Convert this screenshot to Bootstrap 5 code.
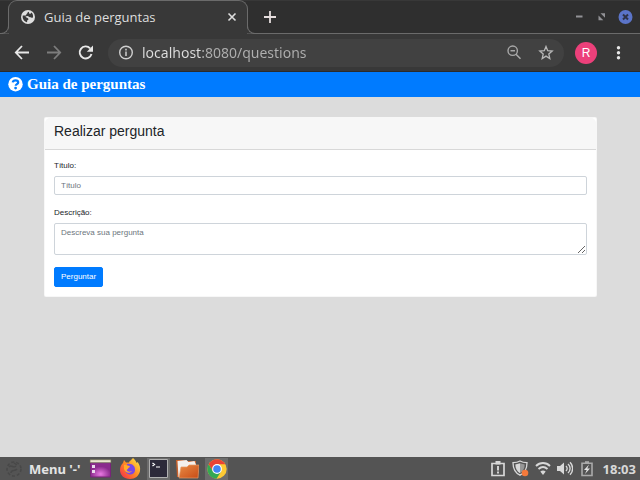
<!DOCTYPE html>
<html lang="pt-BR">
<head>
<meta charset="utf-8">
<meta name="viewport" content="width=device-width, initial-scale=1">
<title>Guia de perguntas</title>
<link href="https://cdn.jsdelivr.net/npm/bootstrap@5.3.0/dist/css/bootstrap.min.css" rel="stylesheet">
<style>
body{background:#dcdcdc;font-family:"Liberation Sans",Arial,sans-serif}
svg{display:block;flex-shrink:0}
.icon-btn{background:none;border:0;padding:0;color:inherit;display:flex;align-items:center;justify-content:center;flex-shrink:0}
.tabstrip{height:34px;background:#2f2f2f;border-bottom:1px solid #6b6b6b;border-top:1px solid #383838;padding:0 7px 0 8px;color:#dedede}
.browser-tab{position:relative;width:240px;height:34px;margin-top:-1px;background:#383838;border:1px solid #6b6b6b;border-bottom:0;border-radius:9px 9px 0 0;padding:0 9px 0 12px;font:13px/32px "Open Sans","Noto Sans",sans-serif}
.browser-tab::before,.browser-tab::after{content:"";position:absolute;bottom:0;width:8px;height:8px;border-bottom:1px solid #6b6b6b;box-sizing:border-box}
.browser-tab::before{left:-8px;border-right:1px solid #6b6b6b;border-bottom-right-radius:8px;box-shadow:2px 2px 0 #383838;clip-path:inset(0)}
.browser-tab::after{right:-8px;border-left:1px solid #6b6b6b;border-bottom-left-radius:8px;box-shadow:-2px 2px 0 #383838;clip-path:inset(0)}
.window-tools{gap:12px;color:#929296}
.toolbar{height:38px;background:#383838;border-bottom:1px solid #2b2b2b;padding:0 12px 0 14px;color:#e8e8e8}
.toolbar-nav{gap:16px;margin-right:14px}
.omnibox{height:28px;border-radius:14px;background:#414141;padding:0 10px 0 10px;color:#a8a8a8}
.address{min-width:0;border:0;outline:0;padding:0;margin-left:8px;font:14px/20px "Noto Sans","Open Sans",sans-serif;color:transparent;background:linear-gradient(90deg,#dedede 59px,#b0b0b0 59px);-webkit-background-clip:text;background-clip:text}
.avatar{width:22px;height:22px;background:#ec407a;border-radius:50%;color:#fff;font:12px/22px "Liberation Sans",sans-serif;margin:0 13px 0 11px}
.site-bar{background:#007bff;height:25px;padding:0 8px}
.site-brand{color:#fff;font:bold 15px/24px "Liberation Serif","Times New Roman",serif;text-decoration:none;gap:4px}
.page-body{padding:20px 43px 20px 44px}
.question-card{border-color:rgba(0,0,0,.03);border-radius:2px;background-clip:border-box}
.question-card .card-header{background:#f7f7f7;border-color:#d8d8d8;padding:4px 9px 8px}
.question-card h1{font-size:14px;line-height:19px;font-weight:400;color:#212529}
.question-card .card-body{padding:10px 9px 9px}
.question-card .form-label{display:block;font-size:8px;line-height:12px;margin-bottom:4px;color:#212529}
.question-card .form-control{font-size:8px;line-height:12px;padding:3px 6px 2px;border-color:#ced4da;border-radius:2px;min-height:19px}
.question-card textarea.form-control{height:32px}
.question-card .form-control::placeholder{color:#6c757d}
.field{margin-bottom:12px}
.ask{display:block;background:#007bff;border-color:#007bff;border-radius:2px;font-size:8px;line-height:12px;padding:3px 6px}
.taskbar{height:23px;background:#545454;color:#e4e4e4;padding:0 4px 0 5px;font:bold 13px/22px "Noto Sans","Open Sans",sans-serif}
.menu-btn{gap:6px}
.launchers{gap:6px;margin-left:9px}
.launch{width:23px;height:22px}
.launch.running{background:#6c6c6c}
.tray{gap:6px;color:#d8d8d8}
.tray time{margin-left:2px}
</style>
</head>
<body class="d-flex flex-column min-vh-100">
<header>
  <div class="tabstrip d-flex align-items-center">
    <div class="browser-tab d-flex align-items-center">
      <svg width="15" height="14" viewBox="0 0 15 14" class="me-2"><circle cx="7" cy="7" r="7" fill="#dedede"/><path d="M7.500 1.700C6 2.200 7 3.200 5.800 3.800 5 4.200 5.600 5.400 4.600 5.500l-2.800.1c-.4 1.700 0 3.400 1 4.600 1 1.100 2 1.700 3.200 2 .4-1-.2-1.600.7-2.100 1-.5 1-1.300.2-1.900-1-.8-2.100-.5-2.500-1.600L6.200 6c1.200-.2 1.600 1.200 2.800 1.200 1.300 0 1.500.9 2.900.3.600-2.100-.3-4-1.600-4.900-.2 1-.8 1.400-1.700 1.100-.8-.3-.1-1.200-1.100-2z" fill="#383838"/></svg>
      <span class="flex-grow-1 text-truncate">Guia de perguntas</span>
      <button class="icon-btn" type="button" aria-label="Fechar guia"><svg width="12" height="12" viewBox="0 0 12 12"><path d="M2.500 2.500l7 7M9.500 2.500l-7 7" stroke="#dedede" stroke-width="1.600"/></svg></button>
    </div>
    <button class="icon-btn ms-3" type="button" aria-label="Nova guia"><svg width="12" height="12" viewBox="0 0 12 12"><path d="M6 0v12M0 6h12" stroke="#e6dede" stroke-width="1.800"/></svg></button>
    <div class="window-tools d-flex align-items-center ms-auto">
      <button class="icon-btn" type="button" aria-label="Minimizar"><svg width="10" height="8" viewBox="0 0 10 8"><path d="M2 3.500h6.500" stroke="currentColor" stroke-width="2"/></svg></button>
      <button class="icon-btn" type="button" aria-label="Restaurar"><svg width="10" height="8" viewBox="0 0 10 8"><path d="M4.500.3h4.500V4.800zM2.500 2.500v4.800H7.300z" fill="currentColor"/></svg></button>
      <button class="icon-btn" type="button" aria-label="Fechar"><svg width="15" height="15" viewBox="0 0 15 15"><circle cx="7.500" cy="7" r="7" fill="#5b74c8"/><path d="M5 4.500l5 5M10 4.500l-5 5" stroke="#2f3347" stroke-width="2"/></svg></button>
    </div>
  </div>
  <div class="toolbar d-flex align-items-center">
    <div class="toolbar-nav d-flex align-items-center">
      <button class="icon-btn" type="button" aria-label="Voltar"><svg width="16" height="16" viewBox="0 0 16 16"><path d="M15 7.500H2M8 1L1.800 7.500 8 14" fill="none" stroke="#e8e8e8" stroke-width="1.800"/></svg></button>
      <button class="icon-btn" type="button" aria-label="Avançar"><svg width="16" height="16" viewBox="0 0 16 16"><path d="M1 7.500h13M8 1l6.200 6.500L8 14" fill="none" stroke="#7d7d7d" stroke-width="1.800"/></svg></button>
      <button class="icon-btn" type="button" aria-label="Recarregar"><svg width="16" height="16" viewBox="0 0 16 16"><path d="M13.500 9A6 6 0 1 1 12.100 3.300" fill="none" stroke="#e8e8e8" stroke-width="1.900"/><path d="M15 .5v6.200H8.800z" fill="#e8e8e8"/></svg></button>
    </div>
    <div class="omnibox d-flex align-items-center flex-grow-1">
      <button class="icon-btn" type="button" aria-label="Informações do site"><svg width="16" height="16" viewBox="0 0 16 16"><circle cx="8" cy="7.500" r="6.300" fill="none" stroke="#cfcfcf" stroke-width="1.400"/><path d="M8 6.500V11M8 3.800v1.600" stroke="#cfcfcf" stroke-width="1.500"/></svg></button>
      <input class="address flex-grow-1" type="text" value="localhost:8080/questions" aria-label="Endereço">
      <button class="icon-btn me-3" type="button" aria-label="Zoom"><svg width="16" height="16" viewBox="0 0 16 16"><circle cx="6.700" cy="5.700" r="4.700" fill="none" stroke="currentColor" stroke-width="1.400"/><path d="M4.500 5.700H9M10 9.200l4.500 4.500" stroke="currentColor" stroke-width="1.600"/></svg></button>
      <button class="icon-btn" type="button" aria-label="Favoritar"><svg width="16" height="16" viewBox="0 0 16 16"><path d="M8 1.500l1.700 4.200 4.500.4L10.800 9l1 4.500L8 11.100l-3.800 2.400 1-4.500-3.400-2.900 4.500-.4z" fill="none" stroke="#b8b8b8" stroke-width="1.300"/></svg></button>
    </div>
    <button class="icon-btn avatar" type="button">R</button>
    <button class="icon-btn" type="button" aria-label="Menu do navegador"><svg width="18" height="16" viewBox="0 0 18 16"><g fill="#e8e8e8"><circle cx="8.500" cy="2.700" r="1.700"/><circle cx="8.500" cy="7.700" r="1.700"/><circle cx="8.500" cy="12.700" r="1.700"/></g></svg></button>
  </div>
</header>

<nav class="site-bar">
  <a class="site-brand d-flex align-items-center" href="#">
    <svg width="15" height="15" viewBox="0 0 15 15"><circle cx="7.500" cy="7.200" r="7.200" fill="#fff"/><path d="M4.700 5.400C5 3.900 6.100 3.300 7.500 3.300c1.600 0 2.700.9 2.700 2.100 0 1.800-2.500 1.700-2.500 3.400" fill="none" stroke="#007bff" stroke-width="2.200"/><circle cx="7.600" cy="11.100" r="1.400" fill="#007bff"/></svg>
    <span>Guia de perguntas</span>
  </a>
</nav>

<main class="page-body flex-grow-1">
  <div class="card question-card">
    <div class="card-header"><h1 class="mb-0">Realizar pergunta</h1></div>
    <form class="card-body">
      <div class="field">
        <label class="form-label" for="titulo">Título:</label>
        <input class="form-control" type="text" id="titulo" placeholder="Título">
      </div>
      <div class="field">
        <label class="form-label" for="descricao">Descrição:</label>
        <textarea class="form-control" id="descricao" placeholder="Descreva sua pergunta"></textarea>
      </div>
      <button class="btn btn-primary ask" type="button">Perguntar</button>
    </form>
  </div>
</main>

<footer class="taskbar d-flex align-items-center">
  <button class="icon-btn menu-btn fw-bold" type="button">
    <svg width="18" height="18" viewBox="0 0 18 18"><g fill="none" stroke="#484848" stroke-width="1.500"><circle cx="9" cy="9" r="7" stroke-dasharray="3 2"/><path d="M4 7c3-3 4 2 7-1M6 13c0-4 4-1 6-4M9 3l3 2"/></g></svg>
    <span>Menu '-'</span>
  </button>
  <div class="launchers d-flex align-items-center">
    <button class="icon-btn launch" type="button" aria-label="Área de trabalho"><svg width="23" height="20" viewBox="0 0 23 20"><defs><radialGradient id="desk" cy=".8"><stop stop-color="#e879e2"/><stop offset="1" stop-color="#8a2b8d"/></radialGradient></defs><path d="M1.500 3h20v15h-20z" fill="url(#desk)" stroke="#782479"/><path d="M1 .7h21v3H1z" fill="#e9e7cf" stroke="#6b6b52" stroke-width=".7"/><path d="M3 6h3v3H3zM3 11h3v3H3z" fill="#ead9ec"/></svg></button>
    <button class="icon-btn launch" type="button" aria-label="Firefox"><svg width="22" height="22" viewBox="0 0 22 22"><defs><linearGradient id="fox" x1="1" x2="0" y2="1"><stop stop-color="#fff04a"/><stop offset=".5" stop-color="#ff8a24"/><stop offset="1" stop-color="#f5234e"/></linearGradient></defs><path d="M14 0c2 2 3 3 3.700 5l1-1c2 3 2.800 5.500 2.300 9-1 5-5 8-10 8-6 0-10-4-10-9 0-3 1-5 3-7l1-3c1 1 1.500 2 2 2.500h3C10 3 12 2.500 14 0z" fill="url(#fox)"/><path d="M8 6c5-1 8.500 2 8 6.500-.3 3-3 4.500-5.500 4C7.500 16 6 14 6 11l4-1 1-1.500-3-1z" fill="#7848e8"/><path d="M5 7c2-1 3 1 6 1-1 1-2 1.500-2 3-3 1 0 4 4 2-2 3-7 2-8-2z" fill="#ffad29"/></svg></button>
    <button class="icon-btn launch running" type="button" aria-label="Terminal"><svg width="19" height="19" viewBox="0 0 19 19"><path d="M.5.500h18v18H.5z" fill="#2c2939" stroke="#b0b0b0"/><path d="M3.500 4l2 1.500-2 1.500M7 8h4" fill="none" stroke="#fff" stroke-width="1.200"/></svg></button>
    <button class="icon-btn launch" type="button" aria-label="Arquivos"><svg width="23" height="20" viewBox="0 0 23 20"><defs><linearGradient id="folder" x2="1" y2="1"><stop stop-color="#e98c45"/><stop offset="1" stop-color="#c84b16"/></linearGradient></defs><path d="M0 1h8l1 1h11v16H1z" fill="#c8622c"/><path d="M1.500 2l9-1 2 2 6-1 2 5v11H2.500z" fill="#f4f0ec"/><path d="M5 8h6l2-2h10l-1 13H3z" fill="url(#folder)" stroke="#e49a65" stroke-width=".7"/></svg></button>
    <button class="icon-btn launch running" type="button" aria-label="Chrome"><svg width="20" height="20" viewBox="0 0 20 20"><circle cx="10" cy="10" r="9.700" fill="#fcc934"/><path d="M1.600 5.200A9.700 9.700 0 0 1 18.400 5.200H10L5.900 12.300z" fill="#ea4335"/><path d="M1.600 5.200a9.700 9.700 0 0 0 7.900 14.500L14.100 12.400 5.900 12.300z" fill="#34a853"/><circle cx="10" cy="10" r="4.900" fill="#fff"/><circle cx="10" cy="10" r="3.800" fill="#4285f4"/></svg></button>
  </div>
  <div class="tray d-flex align-items-center ms-auto">
    <svg width="16" height="16" viewBox="0 0 16 16"><path d="M2 2.500h12v12H2z" fill="none" stroke="currentColor" stroke-width="1.700"/><path d="M5.500 0h5v3.500h-5z" fill="currentColor"/><path d="M8 5v4.500M8 10.500v2" stroke="currentColor" stroke-width="1.900"/></svg>
    <svg width="17" height="17" viewBox="0 0 17 17"><path d="M8 1C6 2.200 4 2.700 1 2.700c0 6 2 10 7 12.500 5-2.500 7-6.500 7-12.500-3 0-5-.5-7-1.700z" fill="none" stroke="currentColor" stroke-width="1.300"/><path d="M8 3.200v10C5 11.500 3.500 9 3.300 4.600z" fill="currentColor"/><path d="M8 3.200v10c3-1.700 4.500-4.200 4.700-8.600z" fill="#969696"/><circle cx="13" cy="13" r="3.300" fill="#f47a3c"/></svg>
    <svg width="16" height="16" viewBox="0 0 16 16"><g fill="none" stroke="currentColor" stroke-width="1.900"><path d="M1 5c4-4 10-4 14 0"/><path d="M3.500 8c3-2.700 6-2.700 9 0"/></g><path d="M5.300 10.500c1.700-1.400 3.700-1.400 5.400 0L8 14z" fill="currentColor"/></svg>
    <svg width="16" height="16" viewBox="0 0 16 16"><path d="M0 5h3l4-3.500v12L3 10H0z" fill="currentColor"/><path d="M9 5c1.500 1.500 1.500 3.500 0 5M11 3c2.800 2.500 2.800 6.500 0 9M13 1.300c3.500 3.500 3.500 9 0 12.400" fill="none" stroke="currentColor" stroke-width="1.400"/></svg>
    <svg width="16" height="16" viewBox="0 0 16 16"><path d="M3 2.300h10v12.200H3z" fill="none" stroke="#aaa" stroke-width="1.600"/><path d="M6 .2h4v2H6z" fill="#aaa"/><path d="M10 3.500L5 9h2.700L6 13l5-5.500H8.300z" fill="#e2e2e2"/></svg>
    <time datetime="18:03">18:03</time>
  </div>
</footer>
<script src="https://cdn.jsdelivr.net/npm/bootstrap@5.3.0/dist/js/bootstrap.bundle.min.js"></script>
</body>
</html>
